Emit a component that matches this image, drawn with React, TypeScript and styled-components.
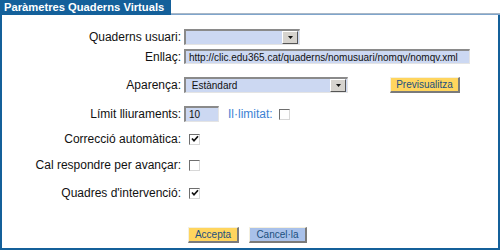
import React from "react";
import styled, { createGlobalStyle } from "styled-components";

const Global = createGlobalStyle`
  html, body { margin: 0; padding: 0; background: #fff; }
  body { font-family: "Liberation Sans", Arial, sans-serif; }
`;

const Frame = styled.div`
  width: 500px;
  height: 250px;
  display: flex;
  flex-direction: column;
  box-sizing: border-box;
`;

const Header = styled.div`
  display: flex;
  align-items: flex-end;
  height: 15px;
`;

const Tab = styled.div`
  background: #14609a;
  color: #fff;
  font-weight: bold;
  font-size: 11.2px;
  height: 15px;
  line-height: 14px;
  padding: 0 7px 0 4px;
  white-space: nowrap;
`;

const TopLine = styled.div`
  flex: 1;
  height: 2px;
  background: #7fa5cc;
  border-top: 1px solid #a9b7c6;
  box-sizing: border-box;
`;

const Body = styled.div`
  flex: 1;
  border: 2px solid #14609a;
  border-top: none;
  display: flex;
  flex-direction: column;
  padding-top: 14px;
`;

const Row = styled.div<{ $mt: number; $h?: number }>`
  display: flex;
  align-items: center;
  margin-top: ${(p) => p.$mt}px;
  height: ${(p) => p.$h ?? 16}px;
`;

const Label = styled.div`
  width: 179px;
  text-align: right;
  font-size: 12px;
  color: #111;
  white-space: nowrap;
  margin-right: 3px;
`;

const Field = styled.div<{ $w: number }>`
  width: ${(p) => p.$w}px;
  height: 100%;
  box-sizing: border-box;
  background: #ccd8f2;
  border-top: 2px solid #8a8a8a;
  border-left: 2px solid #8a8a8a;
  border-right: 1px solid #e4e4e4;
  border-bottom: 1px solid #e4e4e4;
  display: flex;
  align-items: center;
  font-size: 10px;
  color: #111;
  padding-left: 3px;
  overflow: hidden;
  white-space: nowrap;
`;

const SelectBox = styled(Field)`
  justify-content: space-between;
  padding-right: 1px;
`;

const ArrowBtn = styled.div`
  width: 14px;
  height: 11px;
  background: #d6d3ce;
  border-top: 1px solid #fff;
  border-left: 1px solid #fff;
  border-right: 1px solid #555;
  border-bottom: 1px solid #555;
  display: flex;
  align-items: center;
  justify-content: center;
`;

const Button = styled.div<{ $bg: string; $w: number }>`
  width: ${(p) => p.$w}px;
  height: 16px;
  box-sizing: border-box;
  background: ${(p) => p.$bg};
  border-top: 1px solid #f4f0e0;
  border-left: 1px solid #f4f0e0;
  border-right: 2px solid #7a7a7a;
  border-bottom: 2px solid #7a7a7a;
  font-size: 10px;
  color: #1b4f7e;
  display: flex;
  align-items: center;
  justify-content: center;
  white-space: nowrap;
`;

const Blue = styled.span`
  color: #3d82d4;
  font-size: 12px;
  margin-left: 9px;
  margin-right: 6px;
`;

const Box = styled.div<{ $ml: number }>`
  width: 11px;
  height: 11px;
  box-sizing: border-box;
  margin-left: ${(p) => p.$ml}px;
  background: #fff;
  border-top: 1px solid #6e6e6e;
  border-left: 1px solid #6e6e6e;
  border-right: 1px solid #d8d8d8;
  border-bottom: 1px solid #d8d8d8;
  display: flex;
  align-items: center;
  justify-content: center;
`;

const Spacer = styled.div<{ $w: number }>`
  width: ${(p) => p.$w}px;
`;

const Buttons = styled.div`
  display: flex;
  gap: 10px;
  margin-top: 26px;
  padding-left: 186px;
`;

const Arrow = () => (
  <ArrowBtn>
    <svg width="7" height="4" viewBox="0 0 7 4">
      <polygon points="1,0 6,0 3.5,3" fill="#111" />
    </svg>
  </ArrowBtn>
);

const Check = ({ on, ml = 5 }: { on?: boolean; ml?: number }) => (
  <Box $ml={ml}>
    {on && (
      <svg width="8" height="8" viewBox="0 0 8 8">
        <path d="M1 3.5 L3 5.8 L7 1.2" stroke="#111" strokeWidth="1.7" fill="none" />
      </svg>
    )}
  </Box>
);

export default function App() {
  return (
    <Frame>
      <Global />
      <Header>
        <Tab>Paràmetres Quaderns Virtuals</Tab>
        <TopLine />
      </Header>
      <Body>
        <Row $mt={0}>
          <Label>Quaderns usuari:</Label>
          <SelectBox $w={116}>
            <span />
            <Arrow />
          </SelectBox>
        </Row>
        <Row $mt={4} $h={15}>
          <Label>Enllaç:</Label>
          <Field $w={286}>http://clic.edu365.cat/quaderns/nomusuari/nomqv/nomqv.xml</Field>
        </Row>
        <Row $mt={13}>
          <Label>Aparença:</Label>
          <SelectBox $w={164}>
            <span>&nbsp;Estàndard</span>
            <Arrow />
          </SelectBox>
          <Spacer $w={42} />
          <Button $bg="#ffd55e" $w={70}>Previsualitza</Button>
        </Row>
        <Row $mt={13}>
          <Label>Límit lliuraments:</Label>
          <Field $w={35}>10</Field>
          <Blue>Il·limitat:</Blue>
          <Check ml={0} />
        </Row>
        <Row $mt={9} $h={16}>
          <Label>Correcció automàtica:</Label>
          <Check on />
        </Row>
        <Row $mt={10} $h={16}>
          <Label>Cal respondre per avançar:</Label>
          <Check />
        </Row>
        <Row $mt={12} $h={16}>
          <Label>Quadres d'intervenció:</Label>
          <Check on />
        </Row>
        <Buttons>
          <Button $bg="#ffd55e" $w={51}>Accepta</Button>
          <Button $bg="#a9c1ea" $w={58}>Cancel·la</Button>
        </Buttons>
      </Body>
    </Frame>
  );
}
